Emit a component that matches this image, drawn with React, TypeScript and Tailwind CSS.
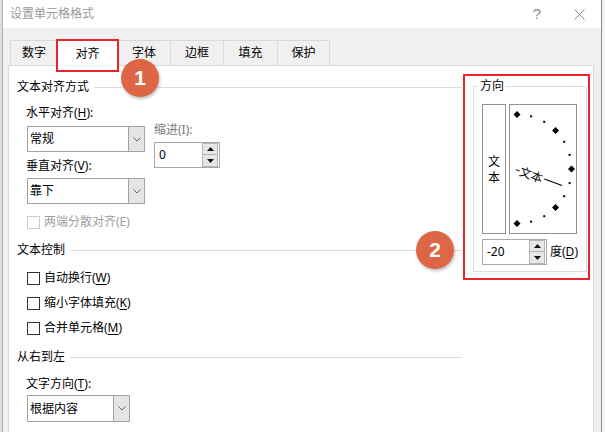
import React from 'react';

function U({ children }: { children: React.ReactNode }) {
  return <span className="underline underline-offset-2 decoration-1">{children}</span>;
}

function GroupHeading({ title, className }: { title: string; className: string }) {
  return (
    <div className={`flex items-center h-4 ${className}`}>
      <span className="whitespace-nowrap">{title}</span>
      <div className="ml-[5px] h-px flex-1 bg-[#dcdcdc]" />
    </div>
  );
}

function Chevron() {
  return (
    <svg width="8" height="5" viewBox="0 0 8 5">
      <polyline points="0.5,0.5 4,4 7.5,0.5" fill="none" stroke="#606060" strokeWidth="1" />
    </svg>
  );
}

function Combo({ value, className }: { value: string; className: string }) {
  return (
    <div className={`flex h-[26px] border border-[#a2a2a2] bg-white ${className}`}>
      <div className="flex-1 pl-[2px] flex items-center">{value}</div>
      <div className="w-[16px] border-l border-[#a2a2a2] bg-[#e5e5e5] flex items-center justify-center">
        <Chevron />
      </div>
    </div>
  );
}

function Arrow({ up }: { up: boolean }) {
  return (
    <svg width="7" height="4" viewBox="0 0 7 4">
      <polygon points={up ? '0,4 3.5,0 7,4' : '0,0 3.5,4 7,0'} fill="#111" />
    </svg>
  );
}

function Spin({ value, className }: { value: string; className: string }) {
  return (
    <div className={`flex h-[26px] border border-[#a8a8a8] bg-white ${className}`}>
      <div className="flex-1 pl-[4px] flex items-center">{value}</div>
      <div className="flex flex-col w-[16px] mr-px">
        <div className="h-[12px] border border-[#b4b4b4] bg-[#e6e6e6] flex items-center justify-center">
          <Arrow up />
        </div>
        <div className="h-[12px] border border-t-0 border-[#b4b4b4] bg-[#e6e6e6] flex items-center justify-center">
          <Arrow up={false} />
        </div>
      </div>
    </div>
  );
}

function Check({ label, disabled }: { label: React.ReactNode; disabled?: boolean }) {
  return (
    <div className={`flex items-center h-4 ${disabled ? 'text-[#a0a0a0]' : ''}`}>
      <div className={`w-[13px] h-[13px] border bg-white ${disabled ? 'border-[#cccccc]' : 'border-[#333333]'}`} />
      <span className="ml-[4px]">{label}</span>
    </div>
  );
}

function Dial() {
  const cx = 7;
  const cy = 64;
  const r = 54.5;
  const pt = (deg: number) => {
    const a = (deg * Math.PI) / 180;
    return [cx + r * Math.cos(a), cy - r * Math.sin(a)];
  };
  const big = [90, 45, 0, -45, -90];
  const small = [75, 60, 30, 15, -15, -30, -60, -75];
  return (
    <svg width="66" height="128" viewBox="0 0 66 128">
      {big.map((d) => {
        const [x, y] = pt(d);
        return (
          <polygon
            key={d}
            points={`${x},${y - 3.5} ${x + 3.5},${y} ${x},${y + 3.5} ${x - 3.5},${y}`}
            fill="#000"
          />
        );
      })}
      {small.map((d) => {
        const [x, y] = pt(d);
        return <rect key={d} x={x - 1} y={y - 1} width="2" height="2" fill="#000" />;
      })}
      <g transform={`translate(${cx} ${cy}) rotate(20)`}>
        <line x1="-1" y1="1" x2="3" y2="1" stroke="#000" strokeWidth="1" />
        <text x="3.5" y="5" fontSize="12" fill="#000" fontFamily="Noto Sans CJK SC, sans-serif">
          文本
        </text>
        <line x1="29" y1="0" x2="48" y2="0" stroke="#000" strokeWidth="1" />
      </g>
    </svg>
  );
}

const tabs = [
  { t: '数字', w: 'w-[47px]' },
  { t: '对齐', w: 'w-[60px]', active: true },
  { t: '字体', w: 'w-[53px]' },
  { t: '边框', w: 'w-[53px]' },
  { t: '填充', w: 'w-[54px]' },
  { t: '保护', w: 'w-[53px] border-r' },
];

export default function App() {
  return (
    <div className="relative flex w-[605px] h-[432px] overflow-hidden bg-white text-[12px] leading-4 text-black font-[Noto_Sans,Noto_Sans_CJK_SC,sans-serif]">
      <div className="w-[2px] bg-[#dedede]" />
      <div className="w-[600px] flex flex-col border-x border-l-[#b0b0b0] border-r-[#8a8a8a]">
        {/* title bar */}
        <div className="h-[28px] shrink-0 bg-white flex items-center pl-[7px] pr-[16px]">
          <span className="text-[#9a9a9a]">设置单元格格式</span>
          <div className="flex-1" />
          <span className="text-[15px] text-[#8a8a8a] font-[Liberation_Sans,sans-serif]">?</span>
          <svg className="ml-[33px]" width="11" height="11" viewBox="0 0 11 11">
            <path d="M0.5 0.5 L10.5 10.5 M10.5 0.5 L0.5 10.5" stroke="#8a8a8a" strokeWidth="1" />
          </svg>
        </div>

        {/* body */}
        <div className="flex-1 flex flex-col bg-[#f0f0f0] pt-[12px] pl-[5px] pr-[7px]">
          <div className="flex items-end h-[25px] ml-[2px] relative z-10">
            {tabs.map((tab) =>
              tab.active ? (
                <div
                  key={tab.t}
                  className={`relative h-[27px] -mb-px bg-white border-l border-t border-[#d9d9d9] flex items-center justify-center pt-[1px] ${tab.w}`}
                >
                  {tab.t}
                  <div className="absolute -left-[2px] -right-[2px] -top-px -bottom-[6px] border-2 border-[#e8232b]" />
                </div>
              ) : (
                <div
                  key={tab.t}
                  className={`h-[25px] border-l border-t border-[#d9d9d9] flex items-center justify-center ${tab.w}`}
                >
                  {tab.t}
                </div>
              ),
            )}
          </div>

          {/* panel */}
          <div className="flex-1 bg-white border border-b-0 border-[#d9d9d9] flex pl-[8px]">
            {/* left column */}
            <div className="w-[445px] flex flex-col pt-[13px]">
              <GroupHeading title="文本对齐方式" className="" />
              <div className="pl-[10px] flex flex-col">
                <div className="flex">
                  <div className="flex flex-col w-[118px]">
                    <div className="mt-[10px] -ml-px">
                      水平对齐(<U>H</U>):
                    </div>
                    <Combo value="常规" className="mt-[5px] w-[118px]" />
                    <div className="mt-[6px] -ml-px">
                      垂直对齐(<U>V</U>):
                    </div>
                    <Combo value="靠下" className="mt-[4px] w-[118px]" />
                  </div>
                  <div className="flex flex-col ml-[9px] mt-[27px]">
                    <div className="text-[#7a7a7a]">缩进(I):</div>
                    <Spin value="0" className="mt-[4px] w-[66px]" />
                  </div>
                </div>
                <div className="mt-[10px]">
                  <Check label="两端分散对齐(E)" disabled />
                </div>
              </div>

              <GroupHeading title="文本控制" className="mt-[12px]" />
              <div className="pl-[10px] flex flex-col gap-[9px] mt-[12px]">
                <Check label={<>自动换行(<U>W</U>)</>} />
                <Check label={<>缩小字体填充(<U>K</U>)</>} />
                <Check label={<>合并单元格(<U>M</U>)</>} />
              </div>

              <GroupHeading title="从右到左" className="mt-[13px]" />
              <div className="pl-[10px] flex flex-col">
                <div className="mt-[11px] -ml-px">
                  文字方向(<U>T</U>):
                </div>
                <Combo value="根据内容" className="mt-[3px] w-[103px] h-[27px]" />
              </div>
            </div>

            {/* orientation */}
            <div className="ml-px mt-[8px] self-start w-[127px] border-2 border-[#e8232b] pt-[2px] pl-[8px] pb-[6px]">
              <fieldset className="w-[114px] border border-[#dcdcdc] p-0 m-0">
                <legend className="ml-[4px] px-[2px] leading-4">方向</legend>
                <div className="pl-[8px] pt-[10px] pb-[6px]">
                  <div className="flex">
                    <div className="w-[24px] h-[130px] border border-[#8f8f8f] flex flex-col items-center justify-center leading-4 pt-px">
                      <span>文</span>
                      <span>本</span>
                    </div>
                    <div className="ml-[3px] w-[68px] h-[130px] border border-[#8f8f8f]">
                      <Dial />
                    </div>
                  </div>
                  <div className="flex items-center mt-[5px]">
                    <Spin value="-20" className="w-[65px]" />
                    <span className="ml-[3px]">
                      度(<U>D</U>)
                    </span>
                  </div>
                </div>
              </fieldset>
            </div>
          </div>
        </div>
      </div>
      <div className="w-[3px] bg-[#f3f3f3]" />

      {/* annotation badges */}
      <div className="absolute left-[121px] top-[59px] w-[38px] h-[38px] rounded-full bg-[#dc6646] text-white font-bold text-[21px] flex items-center justify-center shadow-[1px_2px_3px_rgba(0,0,0,0.25)] font-[Liberation_Sans,sans-serif] z-20">
        1
      </div>
      <div className="absolute left-[416px] top-[231px] w-[38px] h-[38px] rounded-full bg-[#dc6646] text-white font-bold text-[21px] flex items-center justify-center shadow-[1px_2px_3px_rgba(0,0,0,0.25)] font-[Liberation_Sans,sans-serif] z-20">
        2
      </div>
    </div>
  );
}
